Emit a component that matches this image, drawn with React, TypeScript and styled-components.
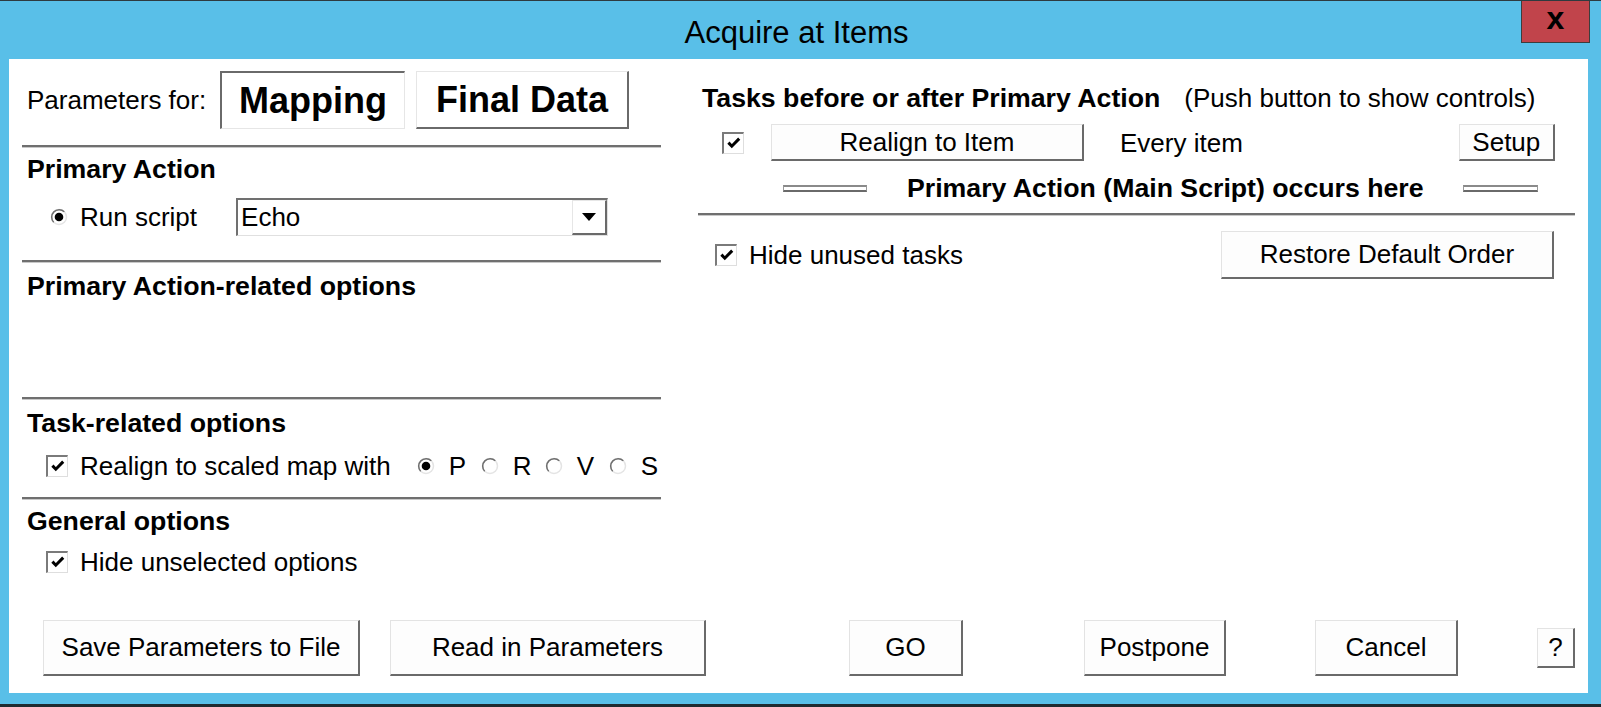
import React from 'react';
import styled, { createGlobalStyle } from 'styled-components';

const GlobalStyle = createGlobalStyle`
  html, body { margin: 0; padding: 0; background: #59bfe8; }
  body { font-family: "Liberation Sans", Arial, sans-serif; color: #000; }
  * { box-sizing: border-box; }
`;

const Window = styled.div`
  width: 1601px;
  height: 707px;
  background: #59bfe8;
  border-top: 1px solid #2e3a3f;
  border-bottom: 3px solid #1f2b30;
  display: flex;
  flex-direction: column;
  overflow: hidden;
`;

const TitleBar = styled.div`
  height: 58px;
  display: grid;
  grid-template-columns: 1fr auto 1fr;
  align-items: start;
`;

const Title = styled.div`
  grid-column: 2;
  font-size: 31px;
  line-height: 30px;
  margin-top: 17px;
  margin-right: 8px;
`;

const CloseBtn = styled.div`
  grid-column: 3;
  justify-self: end;
  margin-right: 11px;
  width: 69px;
  height: 42px;
  background: #c1444b;
  border: 1px solid #3d3d3d;
  border-top: none;
  text-align: center;
  font-weight: 900;
  font-size: 32px;
  line-height: 34px;
`;

const Client = styled.div`
  margin: 0 13px 0 9px;
  height: 634px;
  background: #fff;
  display: flex;
  flex-direction: column;
`;

const Columns = styled.div`
  display: grid;
  grid-template-columns: 639px 877px;
  column-gap: 37px;
  padding-left: 13px;
`;

const Col = styled.div`
  display: flex;
  flex-direction: column;
`;

const Rule = styled.div<{ $mt: number }>`
  margin-top: ${p => p.$mt}px;
  background: #6f6f6f;
  border-bottom: 1px solid #c8c8c8;
  height: 3px;
`;

const Heading = styled.div<{ $mt: number; $pl?: number }>`
  margin-top: ${p => p.$mt}px;
  padding-left: ${p => p.$pl ?? 5}px;
  font-weight: bold;
  font-size: 26.7px;
  line-height: 30px;
  white-space: nowrap;
`;

const Row = styled.div<{ $mt: number; $h: number; $pl?: number }>`
  margin-top: ${p => p.$mt}px;
  height: ${p => p.$h}px;
  padding-left: ${p => p.$pl ?? 0}px;
  display: flex;
  align-items: center;
  white-space: nowrap;
`;

const Text = styled.span<{ $ml?: number }>`
  margin-left: ${p => p.$ml ?? 0}px;
  font-size: 26px;
  line-height: 30px;
`;

const ParamLabel = styled(Text)`
  margin-left: 5px;
  width: 193px;
`;

const TabButton = styled.div<{ $pressed?: boolean; $w: number; $ml?: number }>`
  width: ${p => p.$w}px;
  height: 58px;
  margin-left: ${p => p.$ml ?? 0}px;
  display: flex;
  align-items: center;
  justify-content: center;
  font-weight: bold;
  font-size: 36px;
  background: #fff;
  border-style: solid;
  ${p =>
    p.$pressed
      ? `border-width: 2px 1px 1px 2px; border-color: #6a6a6a #e6e6e6 #e6e6e6 #6a6a6a;`
      : `border-width: 1px 2px 2px 1px; border-color: #e6e6e6 #6a6a6a #6a6a6a #e6e6e6;`}
`;

const Button = styled.div<{ $w: number; $h: number; $ml?: number }>`
  width: ${p => p.$w}px;
  height: ${p => p.$h}px;
  margin-left: ${p => p.$ml ?? 0}px;
  flex: none;
  display: flex;
  align-items: center;
  justify-content: center;
  font-size: 26px;
  background: #fdfdfd;
  border-style: solid;
  border-width: 1px 2px 2px 1px;
  border-color: #e3e3e3 #6a6a6a #6a6a6a #e3e3e3;
`;

const Combo = styled.div`
  margin-left: 39px;
  width: 372px;
  height: 38px;
  display: flex;
  align-items: stretch;
  border-style: solid;
  border-width: 2px 1px 1px 2px;
  border-color: #707070 #e0e0e0 #e0e0e0 #707070;
  background: #fff;
`;

const ComboText = styled.div`
  flex: 1;
  font-size: 26px;
  line-height: 34px;
  padding-left: 3px;
`;

const ComboArrow = styled.div`
  width: 35px;
  display: flex;
  align-items: center;
  justify-content: center;
  border-style: solid;
  border-width: 1px 2px 2px 1px;
  border-color: #e6e6e6 #6a6a6a #6a6a6a #e6e6e6;
`;

const CheckBoxFrame = styled.span<{ $ml?: number }>`
  margin-left: ${p => p.$ml ?? 0}px;
  width: 22px;
  height: 22px;
  flex: none;
  display: inline-flex;
  align-items: flex-start;
  justify-content: flex-start;
  padding: 3px 0 0 3px;
  border-style: solid;
  border-width: 2px 1px 1px 2px;
  border-color: #7a7a7a #dedede #dedede #7a7a7a;
  background: #fff;
`;

const RadioWrap = styled.span<{ $ml?: number }>`
  margin-left: ${p => p.$ml ?? 0}px;
  display: inline-flex;
  align-items: center;
  flex: none;
`;

const RadioLetter = styled(Text)`
  margin-left: 14px;
  width: 22px;
`;

const DoubleLine = styled.div<{ $w: number; $ml: number }>`
  width: ${p => p.$w}px;
  margin-left: ${p => p.$ml}px;
  height: 7px;
  flex: none;
  background: #fff;
  border-style: solid;
  border-width: 2px 1px 2px 1px;
  border-color: #8a8a8a #9a9a9a #6a6a6a #9a9a9a;
`;

const BoldText = styled(Text)`
  font-weight: bold;
  font-size: 26.7px;
`;

const BottomBar = styled.div`
  margin-top: auto;
  margin-bottom: 17px;
  padding-left: 34px;
  height: 56px;
  display: flex;
  align-items: center;
`;

const Check = ({ ml }: { ml?: number }) => (
  <CheckBoxFrame $ml={ml}>
    <svg width="14" height="12" viewBox="0 0 14 12">
      <path d="M1.4 5.6 L4.8 9.2 L12.2 1.6" fill="none" stroke="#000" strokeWidth="3" />
    </svg>
  </CheckBoxFrame>
);

const Radio = ({ on }: { on?: boolean }) => (
  <svg width="18" height="18" viewBox="0 0 18 18">
    <circle cx="9" cy="9" r="7.5" fill="#fff" stroke="#e4e4e4" strokeWidth="1.5" />
    <path d="M14.3 3.7 A7.5 7.5 0 0 0 3.7 14.3" fill="none" stroke="#6e6e6e" strokeWidth="1.5" />
    {on && <circle cx="9" cy="9" r="4.3" fill="#000" />}
  </svg>
);

const RadioOption = ({ label, on, ml }: { label: string; on?: boolean; ml?: number }) => (
  <RadioWrap $ml={ml}>
    <Radio on={on} />
    <RadioLetter>{label}</RadioLetter>
  </RadioWrap>
);

export default function App() {
  return (
    <>
      <GlobalStyle />
      <Window>
        <TitleBar>
          <Title>Acquire at Items</Title>
          <CloseBtn>x</CloseBtn>
        </TitleBar>
        <Client>
          <Columns>
            <Col>
              <Row $mt={12} $h={58}>
                <ParamLabel>Parameters for:</ParamLabel>
                <TabButton $pressed $w={185}>Mapping</TabButton>
                <TabButton $w={213} $ml={11}>Final Data</TabButton>
              </Row>
              <Rule $mt={16} />
              <Heading $mt={6}>Primary Action</Heading>
              <Row $mt={14} $h={38} $pl={28}>
                <Radio on />
                <Text $ml={12}>Run script</Text>
                <Combo>
                  <ComboText>Echo</ComboText>
                  <ComboArrow>
                    <svg width="16" height="10" viewBox="0 0 16 10">
                      <path d="M1 1 L15 1 L8 9 Z" fill="#000" />
                    </svg>
                  </ComboArrow>
                </Combo>
              </Row>
              <Rule $mt={24} />
              <Heading $mt={8}>Primary Action-related options</Heading>
              <Rule $mt={96} />
              <Heading $mt={8}>Task-related options</Heading>
              <Row $mt={13} $h={30} $pl={24}>
                <Check />
                <Text $ml={12}>Realign to scaled map with</Text>
                <RadioOption label="P" on ml={26} />
                <RadioOption label="R" ml={10} />
                <RadioOption label="V" ml={10} />
                <RadioOption label="S" ml={10} />
              </Row>
              <Rule $mt={16} />
              <Heading $mt={6}>General options</Heading>
              <Row $mt={11} $h={30} $pl={24}>
                <Check />
                <Text $ml={12}>Hide unselected options</Text>
              </Row>
            </Col>
            <Col>
              <Row $mt={24} $h={30} $pl={4}>
                <BoldText>Tasks before or after Primary Action</BoldText>
                <Text $ml={24}>(Push button to show controls)</Text>
              </Row>
              <Row $mt={11} $h={37} $pl={24}>
                <Check />
                <Button $w={313} $h={37} $ml={27}>Realign to Item</Button>
                <Text $ml={36}>Every item</Text>
                <Button $w={96} $h={37} $ml={216}>Setup</Button>
              </Row>
              <Row $mt={12} $h={30}>
                <DoubleLine $w={84} $ml={85} />
                <BoldText $ml={40}>Primary Action (Main Script) occurs here</BoldText>
                <DoubleLine $w={75} $ml={39} />
              </Row>
              <Rule $mt={10} />
              <Row $mt={15} $h={48} $pl={17}>
                <Check />
                <Text $ml={12}>Hide unused tasks</Text>
                <Button $w={333} $h={48} $ml={258}>Restore Default Order</Button>
              </Row>
            </Col>
          </Columns>
          <BottomBar>
            <Button $w={317} $h={56}>Save Parameters to File</Button>
            <Button $w={316} $h={56} $ml={30}>Read in Parameters</Button>
            <Button $w={114} $h={56} $ml={143}>GO</Button>
            <Button $w={142} $h={56} $ml={121}>Postpone</Button>
            <Button $w={143} $h={56} $ml={89}>Cancel</Button>
            <Button $w={38} $h={40} $ml={79}>?</Button>
          </BottomBar>
        </Client>
      </Window>
    </>
  );
}
